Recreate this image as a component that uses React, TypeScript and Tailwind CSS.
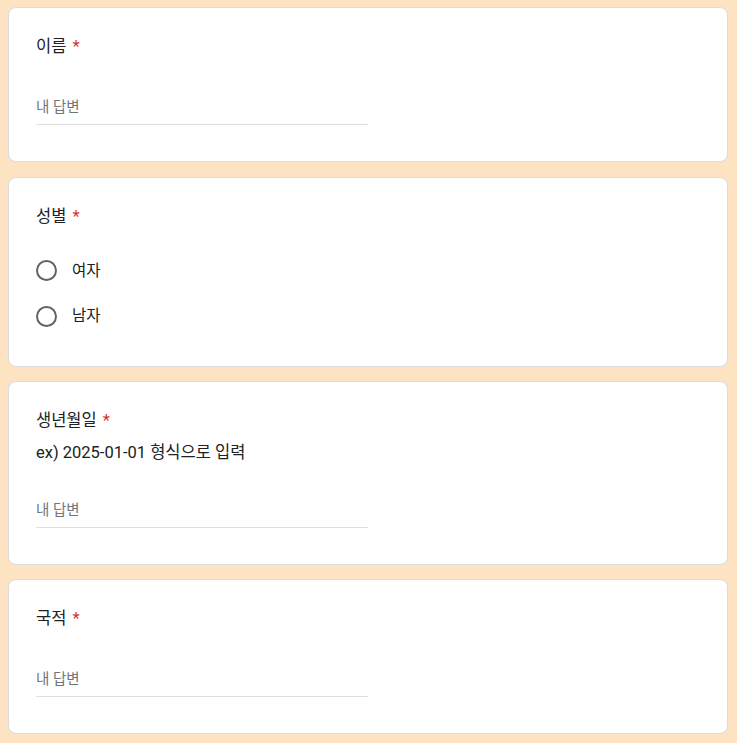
const font = { fontFamily: "Roboto, 'Noto Sans CJK KR', sans-serif" };

function Title({ text }: { text: string }) {
  return (
    <div className="text-[16.5px] leading-[24px] text-[#202124]">
      {text}
      <span className="ml-[6px] text-[#d93025]">*</span>
    </div>
  );
}

function ShortAnswer({ className }: { className: string }) {
  return (
    <div className={`${className} w-[332px] border-b border-[#e0e0e0] pb-[6px] text-[14.5px] leading-[20px] text-[#70757a]`}>
      내 답변
    </div>
  );
}

function Radio({ label }: { label: string }) {
  return (
    <div className="flex h-[45.5px] items-center gap-[15px]">
      <span className="h-[21px] w-[21px] rounded-full border-2 border-[#5f6368]" />
      <span className="text-[15.5px] leading-[20px] text-[#202124]">{label}</span>
    </div>
  );
}

function Card({ children, className }: { children: React.ReactNode; className: string }) {
  return <div className={`rounded-lg border border-[#dadce0] bg-white px-[27px] pt-[27px] ${className}`}>{children}</div>;
}

export default function App() {
  return (
    <div className="min-h-[743px] bg-[#fee3c2] pb-4 pl-2 pr-[9px] pt-[7px]" style={font}>
      <div className="flex flex-col gap-[14px]">
        <Card className="mb-px pb-[36px]">
          <Title text="이름" />
          <ShortAnswer className="mt-[39px]" />
        </Card>
        <Card className="pb-[27px]">
          <Title text="성별" />
          <div className="mt-[19px]">
            <Radio label="여자" />
            <Radio label="남자" />
          </div>
        </Card>
        <Card className="pb-[36px]">
          <Title text="생년월일" />
          <div className="mt-2 text-[16.5px] leading-[24px] text-[#202124]">ex) 2025-01-01 형식으로 입력</div>
          <ShortAnswer className="mt-[36px]" />
        </Card>
        <Card className="pb-[36px]">
          <Title text="국적" />
          <ShortAnswer className="mt-[39px]" />
        </Card>
      </div>
    </div>
  );
}
